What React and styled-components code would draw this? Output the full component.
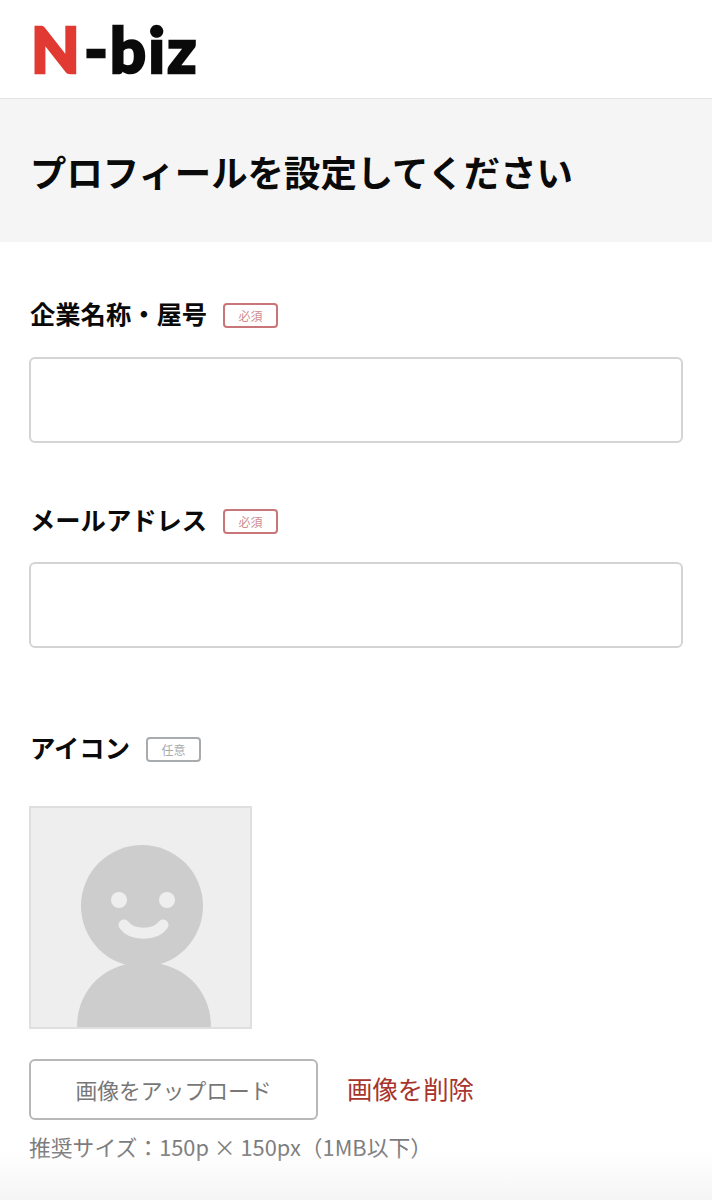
import React from "react";
import styled, { createGlobalStyle } from "styled-components";

const GlobalStyle = createGlobalStyle`
  html, body {
    margin: 0;
    padding: 0;
    background: #fff;
  }
  * {
    box-sizing: border-box;
  }
  body {
    font-family: "Noto Sans CJK JP", "Noto Sans", sans-serif;
  }
`;

const Page = styled.div`
  position: relative;
  width: 712px;
  height: 1200px;
  overflow: hidden;
  background: #fff;
`;

const Header = styled.header`
  height: 99px;
  padding: 12px 0 0 31px;
  border-bottom: 1px solid #e4e4e4;
`;

const Logo = styled.div`
  display: flex;
  font-family: "Lato", sans-serif;
  font-size: 63px;
  font-weight: 900;
  line-height: 74px;
  letter-spacing: 2.4px;
  color: #0a0a0a;
  -webkit-text-stroke: 2.5px #0a0a0a;

  span {
    color: #e03a33;
    margin-right: 2px;
    -webkit-text-stroke: 2.5px #e03a33;
  }
`;

const Banner = styled.div`
  display: flex;
  align-items: center;
  height: 143px;
  padding: 2px 30px 0;
  background: #f5f5f5;
`;

const Title = styled.h1`
  margin: 0;
  font-size: 36.4px;
  font-weight: 700;
  line-height: 1;
  color: #0a0a0a;
`;

const Form = styled.form`
  padding: 0 29px;
`;

const Field = styled.div`
  padding-top: ${(p) => p.$top}px;
`;

const LabelRow = styled.div`
  display: flex;
  align-items: center;
  gap: 16px;
  height: 26px;
`;

const Label = styled.label`
  align-self: flex-start;
  padding-left: 1px;
  font-size: 25.3px;
  font-weight: 700;
  line-height: 22px;
  white-space: nowrap;
  color: #0a0a0a;
`;

const Badge = styled.span`
  display: flex;
  align-items: center;
  justify-content: center;
  width: 55px;
  height: 25px;
  border: 2px solid ${(p) => (p.$required ? "#c9767b" : "#a9acae")};
  border-radius: 4px;
  font-size: 12px;
  color: ${(p) => (p.$required ? "#cf8c90" : "#a9acae")};
`;

const TextInput = styled.input`
  display: block;
  width: 654px;
  height: 86px;
  margin-top: ${(p) => p.$top}px;
  border: 2px solid #d4d4d4;
  border-radius: 6px;
  background: #fff;
  outline: none;
`;

const AvatarBox = styled.div`
  width: 223px;
  height: 223px;
  margin-top: 44px;
  border: 2px solid #dfdfdf;
  background: #eeeeef;

  svg {
    display: block;
    width: 100%;
    height: 100%;
  }
`;

const UploadRow = styled.div`
  display: flex;
  align-items: center;
  gap: 29px;
  margin-top: 30px;
`;

const UploadButton = styled.button`
  width: 289px;
  height: 61px;
  padding: 0;
  border: 2px solid #b8b8b8;
  border-radius: 6px;
  background: #fff;
  font-family: inherit;
  font-size: 21.8px;
  color: #777;
`;

const DeleteLink = styled.a`
  margin-top: -2px;
  font-size: 25.4px;
  line-height: 1;
  color: #a8352c;
`;

const Hint = styled.p`
  margin: 11px 0 0;
  font-size: 21.8px;
  line-height: 32px;
  white-space: nowrap;
  color: #7c7c7c;
`;

const BottomFade = styled.div`
  position: absolute;
  left: 0;
  right: 0;
  bottom: 0;
  height: 50px;
  background: linear-gradient(to bottom, rgba(245, 245, 245, 0), #f5f5f5);
  pointer-events: none;
`;

const Avatar = () => (
  <svg viewBox="0 0 219 219" aria-hidden="true">
    <path d="M46 219 C46 180 76 154 113 154 C150 154 180 180 180 219 Z" fill="#cdcdcd" />
    <circle cx="111" cy="98" r="61" fill="#cdcdcd" />
    <circle cx="88" cy="92" r="8" fill="#eeeeef" />
    <circle cx="136" cy="92" r="8" fill="#eeeeef" />
    <path
      d="M93 117 C101 128 124 128 132 117"
      fill="none"
      stroke="#eeeeef"
      strokeWidth="11"
      strokeLinecap="round"
    />
  </svg>
);

export default function App() {
  return (
    <Page>
      <GlobalStyle />
      <Header>
        <Logo>
          <span>N</span>-biz
        </Logo>
      </Header>
      <Banner>
        <Title>プロフィールを設定してください</Title>
      </Banner>
      <Form>
        <Field $top={60}>
          <LabelRow>
            <Label>企業名称・屋号</Label>
            <Badge $required>必須</Badge>
          </LabelRow>
          <TextInput $top={29} />
        </Field>
        <Field $top={65}>
          <LabelRow>
            <Label>メールアドレス</Label>
            <Badge $required>必須</Badge>
          </LabelRow>
          <TextInput $top={28} />
        </Field>
        <Field $top={88}>
          <LabelRow>
            <Label>アイコン</Label>
            <Badge>任意</Badge>
          </LabelRow>
          <AvatarBox>
            <Avatar />
          </AvatarBox>
          <UploadRow>
            <UploadButton type="button">画像をアップロード</UploadButton>
            <DeleteLink>画像を削除</DeleteLink>
          </UploadRow>
          <Hint>推奨サイズ：150p × 150px（1MB以下）</Hint>
        </Field>
      </Form>
      <BottomFade />
    </Page>
  );
}
